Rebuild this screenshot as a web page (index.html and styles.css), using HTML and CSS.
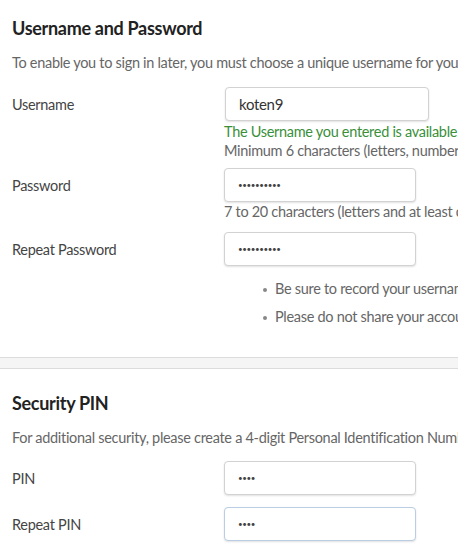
FILE: index.html
```html
<!DOCTYPE html>
<html>
<head>
<meta charset="utf-8">
<link rel="stylesheet" href="styles.css">
</head>
<body>
<section class="card card-first">
  <h2 class="title">Username and Password</h2>
  <p class="desc">To enable you to sign in later, you must choose a unique username for your account.</p>
  <div class="row row-user">
    <label class="label">Username</label>
    <div class="field">
      <div class="input input-wide">koten9</div>
    </div>
  </div>
  <div class="hints hints-user">
    <div class="ok">The Username you entered is available.</div>
    <div class="hint">Minimum 6 characters (letters, numbers, and underscores only)</div>
  </div>
  <div class="row row-pass">
    <label class="label">Password</label>
    <div class="field">
      <div class="input dots">&bull;&bull;&bull;&bull;&bull;&bull;&bull;&bull;&bull;&bull;</div>
    </div>
  </div>
  <div class="hints hints-pass">
    <div class="hint">7 to 20 characters (letters and at least one number)</div>
  </div>
  <div class="row row-repeat">
    <label class="label">Repeat Password</label>
    <div class="field">
      <div class="input dots">&bull;&bull;&bull;&bull;&bull;&bull;&bull;&bull;&bull;&bull;</div>
    </div>
  </div>
  <ul class="notes">
    <li>Be sure to record your username and password in a safe place.</li>
    <li>Please do not share your account information with anyone.</li>
  </ul>
</section>
<section class="card card-second">
  <h2 class="title">Security PIN</h2>
  <p class="desc">For additional security, please create a 4-digit Personal Identification Number (PIN).</p>
  <div class="row row-pin">
    <label class="label">PIN</label>
    <div class="field">
      <div class="input dots">&bull;&bull;&bull;&bull;</div>
    </div>
  </div>
  <div class="row row-pin2">
    <label class="label">Repeat PIN</label>
    <div class="field">
      <div class="input dots focus">&bull;&bull;&bull;&bull;</div>
    </div>
  </div>
</section>
</body>
</html>
```
FILE: styles.css
```css
html, body {
  margin: 0;
  padding: 0;
}
body {
  background: #f5f5f5;
  font-family: Lato, "Open Sans", sans-serif;
  font-size: 14.5px;
  letter-spacing: -0.3px;
  color: #555;
  width: 458px;
  overflow: hidden;
}
.card {
  background: #fff;
  padding: 0 0 0 12px;
  white-space: nowrap;
  overflow: hidden;
}
.card-first {
  border-bottom: 1px solid #dcdcdc;
  height: 358px;
  box-sizing: border-box;
  padding-top: 16px;
}
.card-second {
  margin-top: 10px;
  border-top: 1px solid #dcdcdc;
  padding-top: 22px;
  height: 200px;
  box-sizing: border-box;
}
.title {
  margin: 0;
  font-size: 18px;
  letter-spacing: -0.3px;
  line-height: 24px;
  font-weight: 700;
  color: #222;
}
.desc {
  margin: 12px 0 0;
  line-height: 21px;
  color: #666;
}
.row {
  display: flex;
  align-items: center;
}
.label {
  width: 212px;
  flex: none;
  color: #444;
}
.field {
  flex: none;
}
.input {
  box-sizing: border-box;
  width: 192px;
  height: 34px;
  border: 1px solid #d2d2d2;
  border-radius: 4px;
  box-shadow: 0 1px 2px rgba(0,0,0,0.12);
  padding: 0 13px;
  line-height: 32px;
  color: #333;
  background: #fff;
}
.input-wide {
  width: 204px;
  margin-left: 1px;
  font-size: 15px;
}
.dots {
  font-size: 8px;
  letter-spacing: -0.4px;
  color: #444;
}
.focus {
  border-color: #b9cde3;
}
.row-user { margin-top: 14px; }
.hints {
  padding-left: 212px;
  line-height: 19px;
}
.hints-user { padding-top: 1px; }
.ok { color: #3a8f3a; }
.hint { color: #666; }
.row-pass { margin-top: 8px; }
.row-repeat { margin-top: 11px; }
.notes {
  margin: 13px 0 0;
  padding-left: 263px;
  list-style: none;
  color: #666;
}
.notes li {
  position: relative;
  line-height: 20px;
  margin-bottom: 8px;
}
.notes li::before {
  content: "";
  position: absolute;
  left: -12px;
  top: 9px;
  width: 4px;
  height: 4px;
  border-radius: 50%;
  background: #888;
}
.row-pin { margin-top: 13px; }
.row-pin2 { margin-top: 12px; }
```
